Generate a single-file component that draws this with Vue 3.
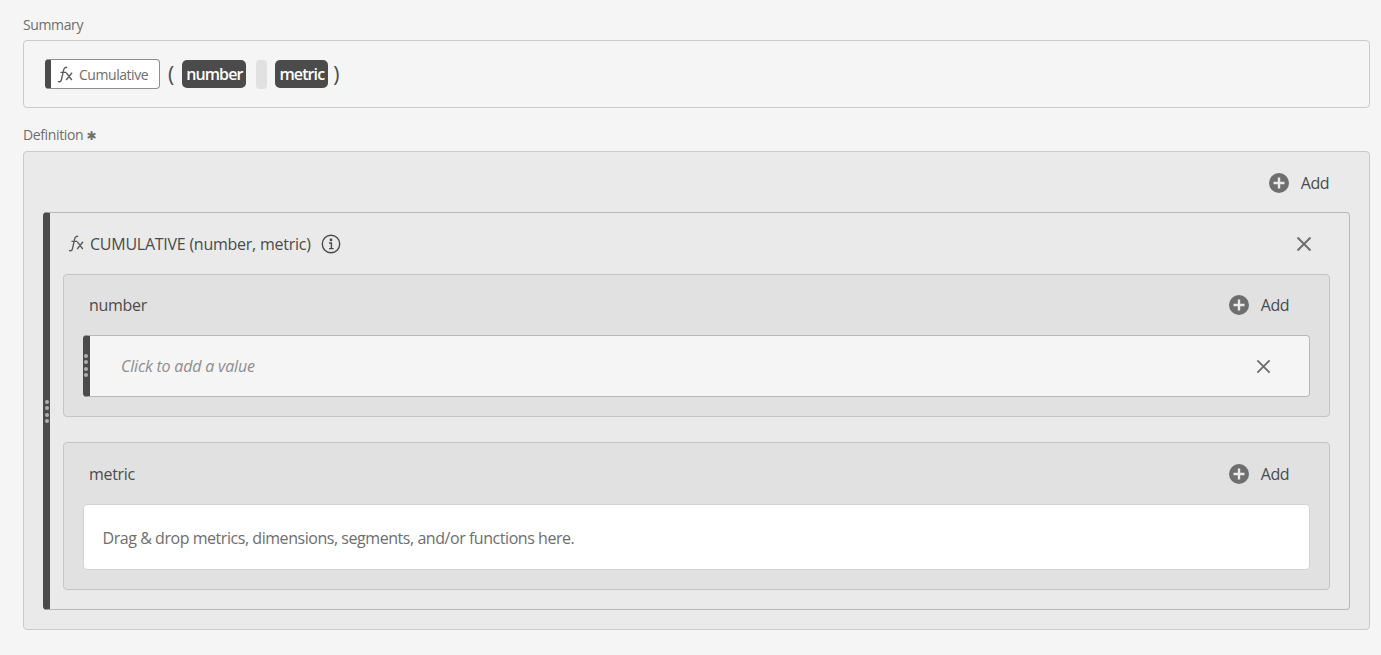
<script setup>
const fxGlyph = 'M10.2 1.6C8.8 .9 7.3 1.6 6.8 3.4L4.4 13.8C4 15.6 2.6 16.2 1 15.4M3.4 6.4H9.4M9.4 6.8l5.4 7.2M15 6.8l-5.8 7.2'
const params = [{ name: 'number' }, { name: 'metric' }]
</script>

<template>
  <div class="page">
    <div class="field-label summary-label">Summary</div>
    <div class="summary-box">
      <div class="fn-chip">
        <svg class="fx-small" viewBox="0 0 16 17" fill="none"><path :d="fxGlyph" /></svg>
        <span>Cumulative</span>
      </div>
      <span class="paren open">(</span>
      <span class="token">number</span>
      <span class="sep"></span>
      <span class="token">metric</span>
      <span class="paren close">)</span>
    </div>

    <div class="field-label definition-label">Definition <span class="star">✱</span></div>
    <div class="definition-box">
      <div class="add-row outer-add">
        <button class="add-btn">
          <svg class="plus" viewBox="0 0 20 20"><circle cx="10" cy="10" r="10" /><path d="M10 4.5v11M4.5 10h11" /></svg>
          <span>Add</span>
        </button>
      </div>

      <div class="fn-card">
        <div class="drag-dots card-dots"><i></i><i></i><i></i><i></i></div>
        <div class="fn-head">
          <svg class="fx-head" viewBox="0 0 16 17" fill="none"><path :d="fxGlyph" /></svg>
          <span class="fn-title">CUMULATIVE (number, metric)</span>
          <svg class="info" viewBox="0 0 20 20" fill="none">
            <circle cx="10" cy="10" r="8.7" />
            <circle class="info-dot" cx="10" cy="5.9" r="1.4" />
            <path d="M8 9h2.4v5.2M8 14.6h4.6" />
          </svg>
          <svg class="close-x head-x" viewBox="0 0 16 16"><path d="M1.5 1.5l13 13M14.5 1.5l-13 13" /></svg>
        </div>

        <div v-for="p in params" :key="p.name" class="param" :class="'param-' + p.name">
          <div class="param-head">
            <span class="param-name">{{ p.name }}</span>
            <button class="add-btn">
              <svg class="plus" viewBox="0 0 20 20"><circle cx="10" cy="10" r="10" /><path d="M10 4.5v11M4.5 10h11" /></svg>
              <span>Add</span>
            </button>
          </div>
          <div v-if="p.name === 'number'" class="value-row">
            <div class="drag-dots row-dots"><i></i><i></i><i></i><i></i></div>
            <span class="placeholder">Click to add a value</span>
            <svg class="close-x row-x" viewBox="0 0 16 16"><path d="M1.5 1.5l13 13M14.5 1.5l-13 13" /></svg>
          </div>
          <div v-else class="drop-row">Drag &amp; drop metrics, dimensions, segments, and/or functions here.</div>
        </div>
      </div>
    </div>
  </div>
</template>

<style>
html, body {
  background: #f5f5f5;
}
</style>

<style scoped>
.page {
  height: 655px;
  box-sizing: border-box;
  padding: 15px 11px 0 23px;
  background: #f5f5f5;
  font-family: "Open Sans", "Noto Sans", sans-serif;
  color: #4b4b4b;
  overflow: hidden;
}

.field-label {
  font-size: 14px;
  line-height: 20px;
  color: #6e6e6e;
  letter-spacing: -0.37px;
}

.star {
  font-family: "DejaVu Sans", sans-serif;
  font-size: 12px;
  line-height: 12px;
}

.summary-box {
  margin-top: 5px;
  height: 68px;
  box-sizing: border-box;
  border: 1px solid #cacaca;
  border-radius: 4px;
  padding-left: 21px;
  display: flex;
  align-items: center;
}

.fn-chip {
  width: 115px;
  height: 30px;
  box-sizing: border-box;
  background: #fff;
  border: 1px solid #8e8e8e;
  border-left: 6px solid #4b4b4b;
  border-radius: 4px;
  display: flex;
  align-items: center;
  padding: 1px 0 0 6px;
  font-size: 14px;
  letter-spacing: -0.45px;
  color: #6e6e6e;
}

.fx-small {
  width: 16px;
  height: 17px;
  margin-right: 6px;
}

.fx-small path,
.fx-head path {
  stroke: #5c5c5c;
  stroke-width: 1.4;
}

.paren {
  font-size: 21px;
  line-height: 30px;
  color: #4b4b4b;
}

.paren.open {
  margin: 0 8px 0 8px;
}

.paren.close {
  margin-left: 5px;
}

.token {
  height: 28px;
  box-sizing: border-box;
  padding: 1px 4px 0;
  background: #4b4b4b;
  color: #fff;
  border-radius: 5px;
  font-size: 16px;
  font-weight: 600;
  line-height: 27px;
  letter-spacing: -0.9px;
}

.sep {
  width: 11px;
  height: 29px;
  margin: 0 8px 0 10px;
  background: #e1e1e1;
  border-radius: 4px;
}

.definition-label {
  margin-top: 17px;
}

.definition-box {
  margin-top: 6px;
  height: 479px;
  box-sizing: border-box;
  border: 1px solid #cacaca;
  border-radius: 4px;
  background: #eaeaea;
  padding: 0 19px;
}

.add-row {
  height: 60px;
  padding-top: 1px;
  box-sizing: border-box;
  display: flex;
  align-items: center;
  justify-content: flex-end;
  padding-right: 21px;
}

.add-btn {
  border: 0;
  padding: 0;
  background: none;
  display: flex;
  align-items: center;
  gap: 12px;
  font: inherit;
  font-size: 16px;
  letter-spacing: -0.5px;
  color: #4b4b4b;
}

.plus {
  width: 20px;
  height: 20px;
}

.plus circle {
  fill: #6e6e6e;
}

.plus path {
  stroke: #eaeaea;
  stroke-width: 2.4;
  fill: none;
}

.fn-card {
  position: relative;
  height: 398px;
  box-sizing: border-box;
  border: 1px solid #b8b8b8;
  border-left: 7px solid #4b4b4b;
  border-radius: 4px;
  padding: 0 19px 0 13px;
}

.fn-head {
  height: 61px;
  display: flex;
  align-items: center;
  padding: 0 0 0 5px;
}

.fx-head {
  width: 16px;
  height: 17px;
  margin-right: 6px;
}

.fn-title {
  font-size: 16px;
  letter-spacing: -0.25px;
  color: #4b4b4b;
}

.info {
  width: 20px;
  height: 20px;
  margin-left: 10px;
}

.info circle,
.info path {
  stroke: #4b4b4b;
  stroke-width: 1.4;
}

.info .info-dot {
  fill: #4b4b4b;
  stroke: none;
}

.close-x {
  margin-left: auto;
}

.close-x path {
  stroke: #6e6e6e;
  stroke-width: 2;
  fill: none;
}

.head-x {
  width: 16px;
  height: 16px;
  margin-right: 18px;
}

.param {
  box-sizing: border-box;
  border: 1px solid #c4c4c4;
  border-radius: 4px;
  background: #e1e1e1;
  padding: 0 19px;
}

.param-number {
  height: 143px;
  margin-bottom: 25px;
}

.param-metric {
  height: 148px;
}

.param-head {
  height: 60px;
  display: flex;
  align-items: center;
  justify-content: space-between;
  padding: 0 21px 0 6px;
}

.param-metric .param-head {
  height: 61px;
}

.param-name {
  font-size: 16px;
  letter-spacing: -0.3px;
}

.value-row {
  position: relative;
  height: 62px;
  box-sizing: border-box;
  background: #f5f5f5;
  border: 1px solid #b8b8b8;
  border-left: 7px solid #4b4b4b;
  border-radius: 4px;
  display: flex;
  align-items: center;
  padding-left: 31px;
}

.placeholder {
  font-size: 16px;
  font-style: italic;
  letter-spacing: -0.2px;
  color: #8e8e8e;
}

.row-x {
  width: 15px;
  height: 15px;
  margin-right: 38px;
}

.drop-row {
  height: 66px;
  box-sizing: border-box;
  background: #fff;
  border: 1px solid #d3d3d3;
  border-radius: 4px;
  display: flex;
  align-items: center;
  padding: 1px 0 0 18.5px;
  font-size: 16px;
  letter-spacing: -0.45px;
  color: #6e6e6e;
}

.drag-dots {
  position: absolute;
  display: flex;
  flex-direction: column;
  gap: 2.3px;
}

.drag-dots i {
  display: block;
  width: 4px;
  height: 4px;
  border-radius: 50%;
  background: #b0b0b0;
}

.card-dots {
  left: -5px;
  top: 187px;
}

.row-dots {
  left: -6px;
  top: 18px;
}
</style>
